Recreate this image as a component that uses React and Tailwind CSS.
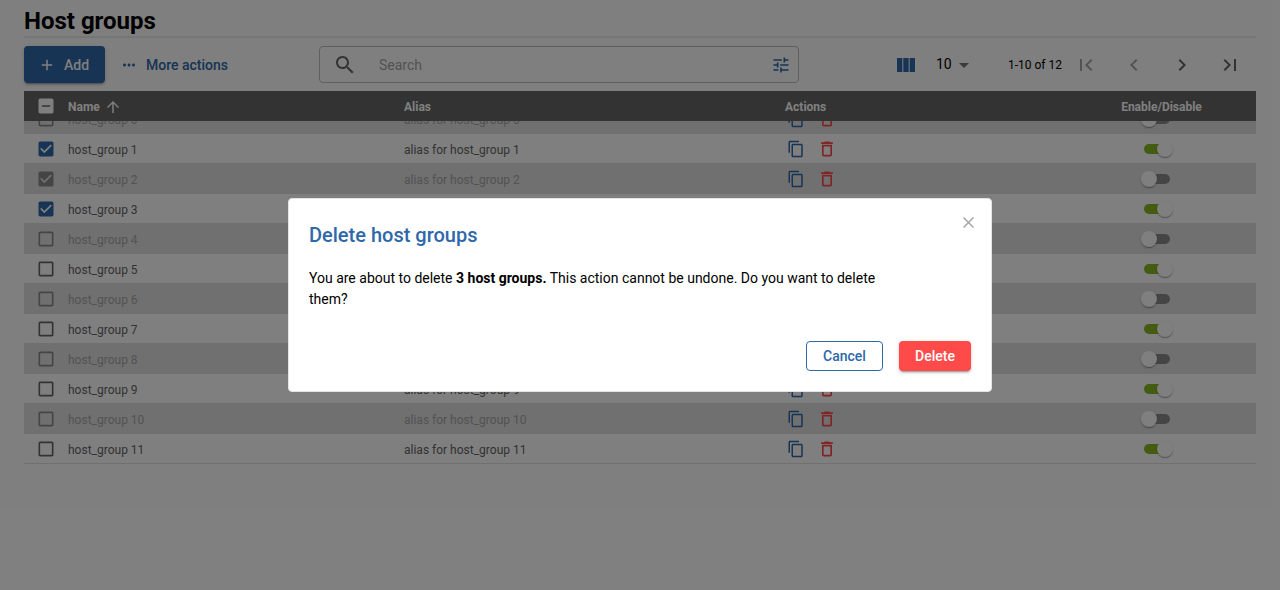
import React from "react";

const paths = {
  add: "M19 13h-6v6h-2v-6H5v-2h6V5h2v6h6v2z",
  more: "M6 10c-1.1 0-2 .9-2 2s.9 2 2 2 2-.9 2-2-.9-2-2-2zm12 0c-1.1 0-2 .9-2 2s.9 2 2 2 2-.9 2-2-.9-2-2-2zm-6 0c-1.1 0-2 .9-2 2s.9 2 2 2 2-.9 2-2-.9-2-2-2z",
  search: "M15.5 14h-.79l-.28-.27C15.41 12.59 16 11.11 16 9.5 16 5.91 13.09 3 9.5 3S3 5.91 3 9.5 5.91 16 9.5 16c1.61 0 3.09-.59 4.23-1.57l.27.28v.79l5 4.99L20.49 19l-4.99-5zm-6 0C7.01 14 5 11.99 5 9.5S7.01 5 9.5 5 14 7.01 14 9.5 11.99 14 9.5 14z",
  tune: "M3 17v2h6v-2H3zM3 5v2h10V5H3zm10 16v-2h8v-2h-8v-2h-2v6h2zM7 9v2H3v2h4v2h2V9H7zm14 4v-2H11v2h10zm-6-4h2V7h4V5h-4V3h-2v6z",
  columns: "M14.67 5v14H9.33V5h5.34zm1 14H21V5h-5.33v14zm-7.34 0V5H3v14h5.33z",
  dropdown: "M7 10l5 5 5-5z",
  first: "M18.41 16.59L13.82 12l4.59-4.59L17 6l-6 6 6 6zM6 6h2v12H6z",
  prev: "M15.41 16.59L10.83 12l4.58-4.59L14 6l-6 6 6 6 1.41-1.41z",
  next: "M8.59 16.59L13.17 12 8.59 7.41 10 6l6 6-6 6-1.41-1.41z",
  last: "M5.59 7.41L10.18 12l-4.59 4.59L7 18l6-6-6-6zM16 6h2v12h-2z",
  up: "M4 12l1.41 1.41L11 7.83V20h2V7.83l5.58 5.59L20 12l-8-8-8 8z",
  copy: "M16 1H4c-1.1 0-2 .9-2 2v14h2V3h12V1zm3 4H8c-1.1 0-2 .9-2 2v14c0 1.1.9 2 2 2h11c1.1 0 2-.9 2-2V7c0-1.1-.9-2-2-2zm0 16H8V7h11v14z",
  trash: "M6 19c0 1.1.9 2 2 2h8c1.1 0 2-.9 2-2V7H6v12zM8 9h8v10H8V9zm7.5-5l-1-1h-5l-1 1H5v2h14V4z",
  box: "M19 5v14H5V5h14m0-2H5c-1.1 0-2 .9-2 2v14c0 1.1.9 2 2 2h14c1.1 0 2-.9 2-2V5c0-1.1-.9-2-2-2z",
  checked: "M19 3H5c-1.11 0-2 .9-2 2v14c0 1.1.89 2 2 2h14c1.11 0 2-.9 2-2V5c0-1.1-.89-2-2-2zm-9 14l-5-5 1.41-1.41L10 14.17l7.59-7.59L19 8l-9 9z",
  partial: "M19 3H5c-1.1 0-2 .9-2 2v14c0 1.1.9 2 2 2h14c1.1 0 2-.9 2-2V5c0-1.1-.9-2-2-2zm-2 10H7v-2h10v2z",
};

function Icon({ name, className = "size-6" }) {
  return (
    <svg viewBox="0 0 24 24" fill="currentColor" className={`shrink-0 ${className}`} aria-hidden="true">
      <path d={paths[name]} />
    </svg>
  );
}

function Switch({ on }) {
  return (
    <span className={`flex h-[10px] w-[26px] items-center rounded-full ${on ? "justify-end bg-[#88b922]" : "bg-black/38"}`}>
      <span
        className={`size-4 shrink-0 rounded-full bg-white shadow-[0_2px_1px_-1px_rgba(0,0,0,0.2),0_1px_1px_0_rgba(0,0,0,0.14),0_1px_3px_0_rgba(0,0,0,0.12)] ${on ? "-mr-[3px]" : "-ml-[3px]"}`}
      />
    </span>
  );
}

const columns = "grid grid-cols-[44px_336px_381px_283px_188px] items-center";

const rows = Array.from({ length: 12 }, (_, i) => ({
  id: i,
  name: `host_group ${i}`,
  alias: `alias for host_group ${i}`,
  enabled: i % 2 === 1,
  selected: i >= 1 && i <= 3,
}));

function Row({ row }) {
  const { enabled, selected } = row;
  const checkColor = !enabled ? "text-black/38" : selected ? "text-[#2e68aa]" : "text-[#666666]";
  return (
    <div
      className={`${columns} h-[30px] shrink-0 border-b border-[#e0e0e0] pt-px text-xs ${
        enabled ? "text-[#666666]" : "bg-[#e0e0e0] text-[#a6a6a6]"
      }`}
    >
      <span className={`flex pl-3 ${checkColor}`}>
        <Icon name={selected ? "checked" : "box"} className="size-5" />
      </span>
      <span className="pt-[2px]">{row.name}</span>
      <span className="pt-[2px]">{row.alias}</span>
      <span className="flex items-center gap-3 pl-[2px]">
        <Icon name="copy" className="size-[18px] text-[#2e68aa]" />
        <Icon name="trash" className="size-5 text-[#ff4a4a]" />
      </span>
      <span className="flex justify-center pr-[10px]">
        <Switch on={enabled} />
      </span>
    </div>
  );
}

function Toolbar() {
  return (
    <div className="mt-2 flex h-[37px] items-center text-sm">
      <button className="flex h-[37px] w-[81px] items-center gap-2 rounded-[4px] bg-[#2e68aa] pl-[14px] font-medium text-white shadow-[0_3px_1px_-2px_rgba(0,0,0,0.2),0_2px_2px_0_rgba(0,0,0,0.14),0_1px_5px_0_rgba(0,0,0,0.12)]">
        <Icon name="add" className="size-[18px]" />
        Add
      </button>
      <button className="ml-[15px] flex w-[199px] items-center gap-2 font-medium text-[#2e68aa]">
        <Icon name="more" className="size-[18px]" />
        More actions
      </button>
      <div className="flex h-[37px] w-[480px] items-center rounded-[4px] border border-[#bfbfbf] pr-[7px] pl-[13px]">
        <Icon name="search" className="size-6 text-[#666666]" />
        <span className="ml-[22px] grow text-[#a6a6a6]">Search</span>
        <Icon name="tune" className="size-5 text-[#2e68aa]" />
      </div>
      <div className="ml-[95px] flex grow items-center">
        <Icon name="columns" className="size-6 text-[#2e68aa]" />
        <span className="ml-[18px] w-4 pb-px">10</span>
        <Icon name="dropdown" className="size-6 text-[#757575]" />
        <span className="ml-8 w-[66px] text-xs">1-10 of 12</span>
        <span className="flex gap-6 text-[#666666]">
          <Icon name="first" className="size-6 text-[#a6a6a6]" />
          <Icon name="prev" className="size-6 text-[#a6a6a6]" />
          <Icon name="next" />
          <Icon name="last" />
        </span>
      </div>
    </div>
  );
}

function DeleteDialog() {
  return (
    <div
      role="dialog"
      aria-label="Delete host groups"
      className="relative flex h-[194px] w-[704px] flex-col rounded-[4px] border border-[#e3e3e3] bg-white p-5"
    >
      <button aria-label="Close" className="absolute top-[17.5px] right-[17.5px] text-[#a6a6a6]">
        <svg viewBox="0 0 11 11" className="size-[11px]" fill="none" stroke="currentColor" strokeWidth="1.5">
          <path d="M.5.5l10 10M10.5.5l-10 10" />
        </svg>
      </button>
      <h2 className="text-xl leading-8 font-medium text-[#2e68aa]">Delete host groups</h2>
      <p className="mt-[17px] w-[594px] text-sm leading-[21px]">
        You are about to delete <strong>3 host groups.</strong> This action cannot be undone. Do you want to delete them?
      </p>
      <div className="mt-auto flex justify-end gap-4 text-sm font-medium">
        <button className="h-[30px] w-[77px] rounded-[4px] border border-[#2e68aa] text-[#2e68aa]">Cancel</button>
        <button className="h-[30px] w-[72px] rounded-[4px] bg-[#ff4a4a] text-white shadow-[0_3px_1px_-2px_rgba(0,0,0,0.2),0_2px_2px_0_rgba(0,0,0,0.14),0_1px_5px_0_rgba(0,0,0,0.12)]">
          Delete
        </button>
      </div>
    </div>
  );
}

export default function App() {
  return (
    <div className="relative h-[590px] w-[1280px] overflow-hidden bg-white font-[Roboto,sans-serif] text-black">
      <main className="px-6">
        <h1 className="h-[38px] border-b-2 border-[#ededed] pt-[5px] text-2xl leading-8 font-bold">Host groups</h1>
        <Toolbar />
        <section className="mt-2">
          <div className={`${columns} h-[30px] bg-[#666666] text-xs font-bold text-white`}>
            <span className="flex pl-3">
              <Icon name="partial" className="size-5" />
            </span>
            <span className="flex items-center gap-1 pt-px">
              Name
              <Icon name="up" className="size-[18px]" />
            </span>
            <span className="pt-[2px]">Alias</span>
            <span className="pt-[2px]">Actions</span>
            <span className="pt-[2px] pr-px text-center">Enable/Disable</span>
          </div>
          <div className="flex h-[343px] flex-col justify-end overflow-hidden">
            {rows.map((row) => (
              <Row key={row.id} row={row} />
            ))}
          </div>
        </section>
      </main>
      <div className="absolute inset-0 flex items-center justify-center bg-black/50">
        <DeleteDialog />
      </div>
    </div>
  );
}
